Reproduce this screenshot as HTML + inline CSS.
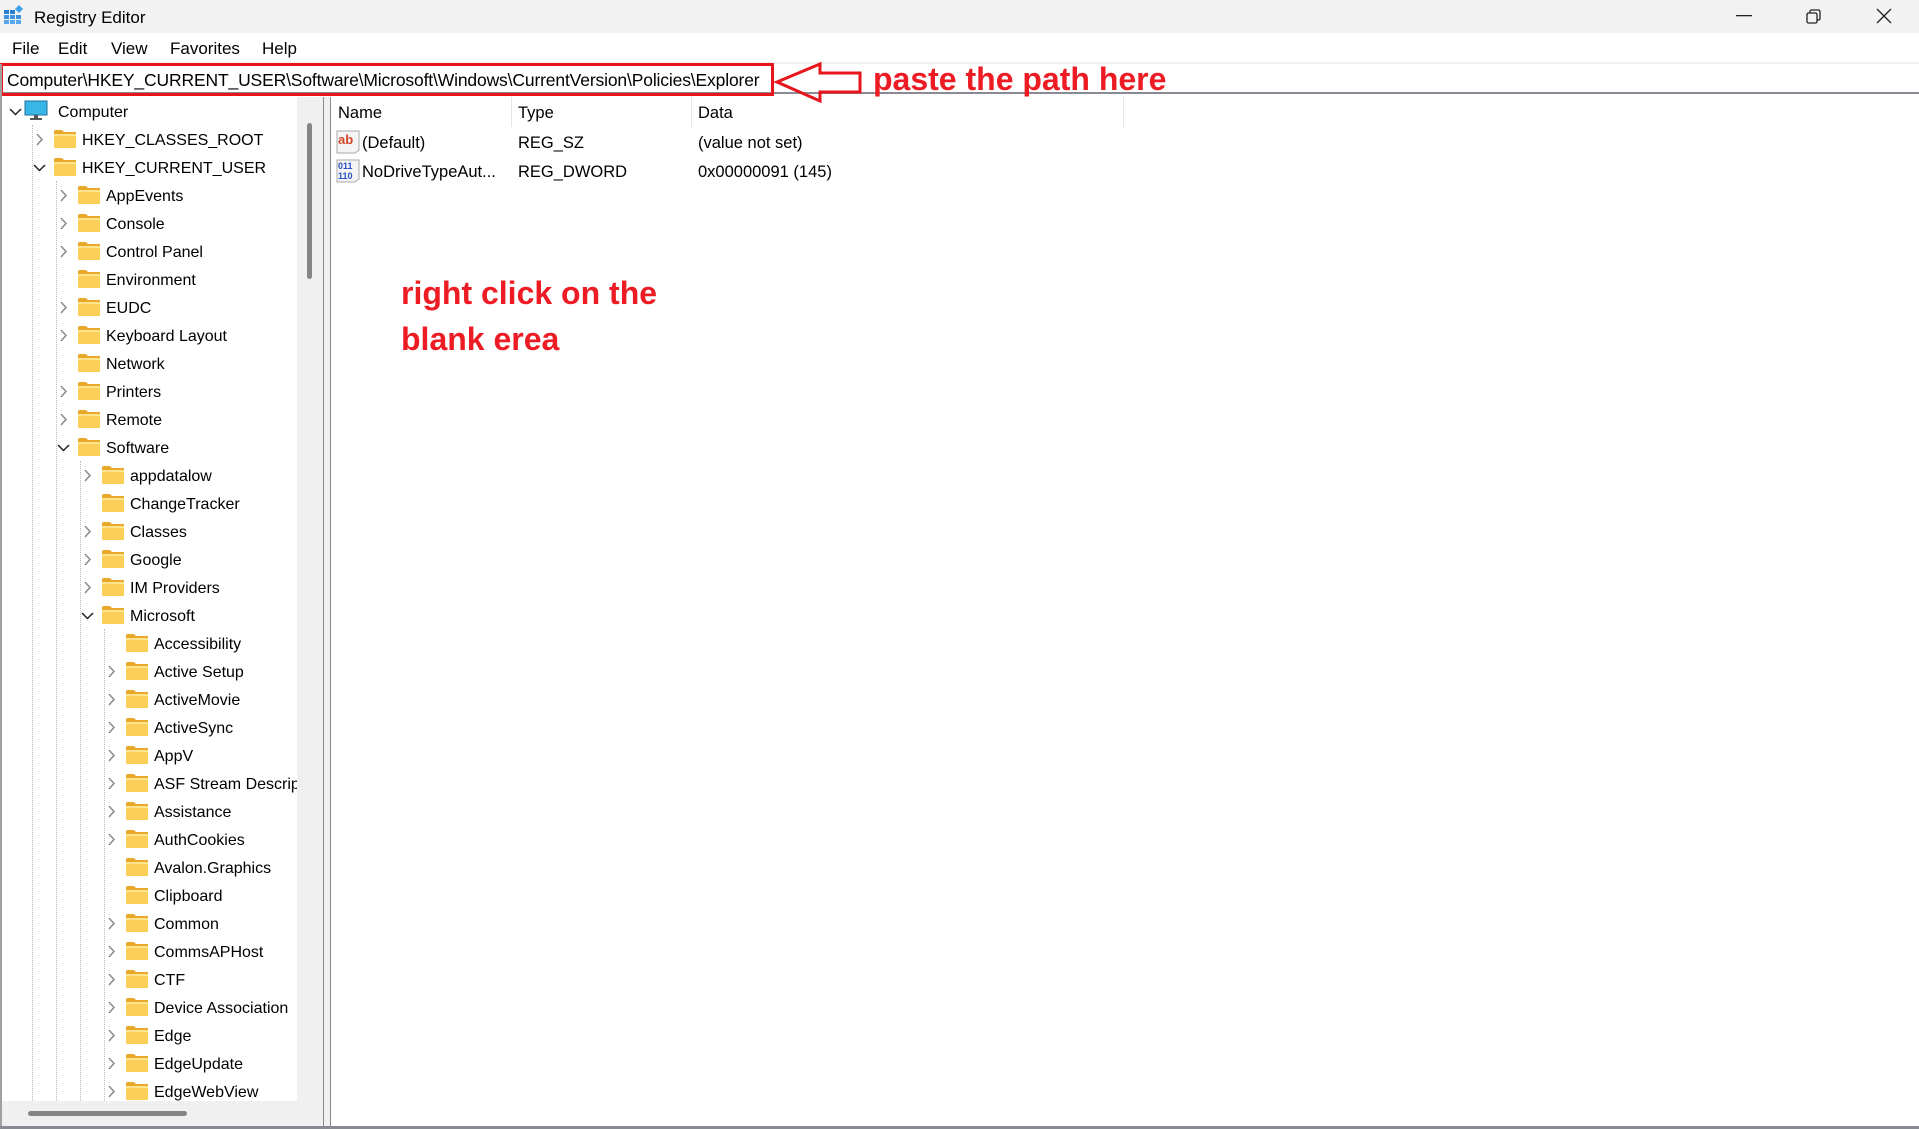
<!DOCTYPE html>
<html><head><meta charset="utf-8">
<style>
*{margin:0;padding:0;box-sizing:border-box}
body{width:1919px;height:1129px;overflow:hidden;background:#fff;font-family:"Liberation Sans",sans-serif;font-size:17px;color:#000;position:relative}
.abs{position:absolute}
#title{left:0;top:0;width:1919px;height:33px;background:#f2f2f2}
#menu{left:0;top:33px;width:1919px;height:29px;background:#fff}
#menu span{position:absolute;top:6px}
#gap{left:0;top:62px;width:1919px;height:2px;background:#f0f0f0}
#addr{left:0;top:64px;width:1919px;height:30px;background:#fff;border-bottom:2px solid #8a8a93}
#tree{left:2px;top:97px;width:295px;height:1004px;overflow:hidden;background:#fff;font-size:16px}
.r{position:absolute;height:28px;white-space:nowrap}
.r svg{position:absolute}
.r .t{position:absolute;left:56px;top:7px}
.f{left:28px;top:5px}
.c{left:9px;top:8px}
.r.l1{left:24px}.r.l2{left:48px}.r.l3{left:72px}.r.l4{left:96px}
.lst{font-size:16.5px}
</style></head><body>
<div id="title" class="abs">
<svg class="abs" style="left:3px;top:4px" width="20" height="22" viewBox="0 0 20 22"><rect x="1" y="6" width="5" height="4" fill="#2d7fd0"/><rect x="7" y="6" width="5" height="4" fill="#2d7fd0"/><rect x="1" y="11" width="5" height="4" fill="#3c92e0"/><rect x="7" y="11" width="5" height="4" fill="#3c92e0"/><rect x="13" y="11" width="5" height="4" fill="#3c92e0"/><rect x="1" y="16" width="5" height="4" fill="#56a8ee"/><rect x="7" y="16" width="5" height="4" fill="#56a8ee"/><rect x="13" y="16" width="5" height="4" fill="#56a8ee"/><path d="M16 1 L20 5 L16 9 L12 5Z" fill="#3aa0e8"/></svg>
<span class="abs" style="left:34px;top:8px;font-size:17px">Registry Editor</span>
<svg class="abs" style="left:1736px;top:15px" width="16" height="2"><rect width="16" height="1.3" fill="#222"/></svg>
<svg class="abs" style="left:1806px;top:9px" width="15" height="15" viewBox="0 0 15 15" fill="none" stroke="#222" stroke-width="1.3"><rect x="1" y="4" width="10" height="10" rx="1.5"/><path d="M4 4V2.5A1.5 1.5 0 0 1 5.5 1H12.5A1.5 1.5 0 0 1 14 2.5V9.5A1.5 1.5 0 0 1 12.5 11H11"/></svg>
<svg class="abs" style="left:1876px;top:8px" width="16" height="16" viewBox="0 0 16 16" stroke="#222" stroke-width="1.3"><path d="M1 1L15 15M15 1L1 15"/></svg>
</div>
<div id="menu" class="abs"><span style="left:12px">File</span><span style="left:58px">Edit</span><span style="left:111px">View</span><span style="left:170px">Favorites</span><span style="left:262px">Help</span></div>
<div id="gap" class="abs"></div>
<div id="addr" class="abs"><span class="abs" style="left:7px;top:6px;font-size:17.5px;letter-spacing:-0.15px">Computer\HKEY_CURRENT_USER\Software\Microsoft\Windows\CurrentVersion\Policies\Explorer</span></div>
<div class="abs" style="left:0;top:63px;width:774px;height:33px;border:3px solid #e8141c"></div>
<svg class="abs" style="left:772px;top:60px" width="92" height="46" viewBox="0 0 92 46"><path d="M5 22 L48 4 L48 13 L88 13 L88 32 L48 32 L48 41 Z" fill="none" stroke="#e8141c" stroke-width="3"/></svg>
<div class="abs" style="left:873px;top:61px;font-size:32px;font-weight:bold;color:#ed1c24">paste the path here</div>
<div class="abs" style="left:401px;top:270px;font-size:32px;font-weight:bold;color:#ed1c24;line-height:46px">right click on the<br>blank erea</div>

<div id="tree" class="abs">
<svg width="0" height="0" style="position:absolute"><defs>
<g id="fold"><path d="M0 2 Q0 0 2 0 H8 L10 2 H22 V18 H0Z" fill="#e8a92a"/><rect x="0" y="4" width="22" height="14" fill="#fcd058"/><rect x="0" y="4" width="22" height="2" fill="#ffe38c"/></g>
<polyline id="cr" points="2,1 7,6.5 2,12" fill="none" stroke="#8a8a8a" stroke-width="1.5"/>
<polyline id="cd" points="1,3 6.5,8.5 12,3" fill="none" stroke="#222" stroke-width="1.5"/>
</defs></svg>
<div class="abs" style="left:30px;top:28px;height:976px;border-left:1px dotted #bbb"></div>
<div class="abs" style="left:54px;top:84px;height:920px;border-left:1px dotted #bbb"></div>
<div class="abs" style="left:78px;top:364px;height:640px;border-left:1px dotted #bbb"></div>
<div class="abs" style="left:102px;top:532px;height:472px;border-left:1px dotted #bbb"></div>

<div class="r" style="top:0;left:0"><svg class="c" width="14" height="14" style="left:7px;top:9px"><use href="#cd"/></svg><svg width="24" height="22" style="left:22px;top:3px" viewBox="0 0 24 22"><rect x="1" y="1" width="22" height="14" fill="#39b6e6" stroke="#1f6f9a"/><rect x="10" y="15" width="4" height="3" fill="#555"/><rect x="6" y="18" width="12" height="2" fill="#555"/></svg><span class="t">Computer</span></div>
<div class="r l1" style="top:28px"><svg class="c" width="14" height="14"><use href="#cr"/></svg><svg class="f" width="22" height="18"><use href="#fold"/></svg><span class="t">HKEY_CLASSES_ROOT</span></div>
<div class="r l1" style="top:56px"><svg class="c" width="14" height="14" style="left:7px;top:9px"><use href="#cd"/></svg><svg class="f" width="22" height="18"><use href="#fold"/></svg><span class="t">HKEY_CURRENT_USER</span></div>
<div class="r l2" style="top:84px"><svg class="c" width="14" height="14"><use href="#cr"/></svg><svg class="f" width="22" height="18"><use href="#fold"/></svg><span class="t">AppEvents</span></div>
<div class="r l2" style="top:112px"><svg class="c" width="14" height="14"><use href="#cr"/></svg><svg class="f" width="22" height="18"><use href="#fold"/></svg><span class="t">Console</span></div>
<div class="r l2" style="top:140px"><svg class="c" width="14" height="14"><use href="#cr"/></svg><svg class="f" width="22" height="18"><use href="#fold"/></svg><span class="t">Control Panel</span></div>
<div class="r l2" style="top:168px"><svg class="f" width="22" height="18"><use href="#fold"/></svg><span class="t">Environment</span></div>
<div class="r l2" style="top:196px"><svg class="c" width="14" height="14"><use href="#cr"/></svg><svg class="f" width="22" height="18"><use href="#fold"/></svg><span class="t">EUDC</span></div>
<div class="r l2" style="top:224px"><svg class="c" width="14" height="14"><use href="#cr"/></svg><svg class="f" width="22" height="18"><use href="#fold"/></svg><span class="t">Keyboard Layout</span></div>
<div class="r l2" style="top:252px"><svg class="f" width="22" height="18"><use href="#fold"/></svg><span class="t">Network</span></div>
<div class="r l2" style="top:280px"><svg class="c" width="14" height="14"><use href="#cr"/></svg><svg class="f" width="22" height="18"><use href="#fold"/></svg><span class="t">Printers</span></div>
<div class="r l2" style="top:308px"><svg class="c" width="14" height="14"><use href="#cr"/></svg><svg class="f" width="22" height="18"><use href="#fold"/></svg><span class="t">Remote</span></div>
<div class="r l2" style="top:336px"><svg class="c" width="14" height="14" style="left:7px;top:9px"><use href="#cd"/></svg><svg class="f" width="22" height="18"><use href="#fold"/></svg><span class="t">Software</span></div>
<div class="r l3" style="top:364px"><svg class="c" width="14" height="14"><use href="#cr"/></svg><svg class="f" width="22" height="18"><use href="#fold"/></svg><span class="t">appdatalow</span></div>
<div class="r l3" style="top:392px"><svg class="f" width="22" height="18"><use href="#fold"/></svg><span class="t">ChangeTracker</span></div>
<div class="r l3" style="top:420px"><svg class="c" width="14" height="14"><use href="#cr"/></svg><svg class="f" width="22" height="18"><use href="#fold"/></svg><span class="t">Classes</span></div>
<div class="r l3" style="top:448px"><svg class="c" width="14" height="14"><use href="#cr"/></svg><svg class="f" width="22" height="18"><use href="#fold"/></svg><span class="t">Google</span></div>
<div class="r l3" style="top:476px"><svg class="c" width="14" height="14"><use href="#cr"/></svg><svg class="f" width="22" height="18"><use href="#fold"/></svg><span class="t">IM Providers</span></div>
<div class="r l3" style="top:504px"><svg class="c" width="14" height="14" style="left:7px;top:9px"><use href="#cd"/></svg><svg class="f" width="22" height="18"><use href="#fold"/></svg><span class="t">Microsoft</span></div>
<div class="r l4" style="top:532px"><svg class="f" width="22" height="18"><use href="#fold"/></svg><span class="t">Accessibility</span></div>
<div class="r l4" style="top:560px"><svg class="c" width="14" height="14"><use href="#cr"/></svg><svg class="f" width="22" height="18"><use href="#fold"/></svg><span class="t">Active Setup</span></div>
<div class="r l4" style="top:588px"><svg class="c" width="14" height="14"><use href="#cr"/></svg><svg class="f" width="22" height="18"><use href="#fold"/></svg><span class="t">ActiveMovie</span></div>
<div class="r l4" style="top:616px"><svg class="c" width="14" height="14"><use href="#cr"/></svg><svg class="f" width="22" height="18"><use href="#fold"/></svg><span class="t">ActiveSync</span></div>
<div class="r l4" style="top:644px"><svg class="c" width="14" height="14"><use href="#cr"/></svg><svg class="f" width="22" height="18"><use href="#fold"/></svg><span class="t">AppV</span></div>
<div class="r l4" style="top:672px"><svg class="c" width="14" height="14"><use href="#cr"/></svg><svg class="f" width="22" height="18"><use href="#fold"/></svg><span class="t">ASF Stream Descriptor</span></div>
<div class="r l4" style="top:700px"><svg class="c" width="14" height="14"><use href="#cr"/></svg><svg class="f" width="22" height="18"><use href="#fold"/></svg><span class="t">Assistance</span></div>
<div class="r l4" style="top:728px"><svg class="c" width="14" height="14"><use href="#cr"/></svg><svg class="f" width="22" height="18"><use href="#fold"/></svg><span class="t">AuthCookies</span></div>
<div class="r l4" style="top:756px"><svg class="f" width="22" height="18"><use href="#fold"/></svg><span class="t">Avalon.Graphics</span></div>
<div class="r l4" style="top:784px"><svg class="f" width="22" height="18"><use href="#fold"/></svg><span class="t">Clipboard</span></div>
<div class="r l4" style="top:812px"><svg class="c" width="14" height="14"><use href="#cr"/></svg><svg class="f" width="22" height="18"><use href="#fold"/></svg><span class="t">Common</span></div>
<div class="r l4" style="top:840px"><svg class="c" width="14" height="14"><use href="#cr"/></svg><svg class="f" width="22" height="18"><use href="#fold"/></svg><span class="t">CommsAPHost</span></div>
<div class="r l4" style="top:868px"><svg class="c" width="14" height="14"><use href="#cr"/></svg><svg class="f" width="22" height="18"><use href="#fold"/></svg><span class="t">CTF</span></div>
<div class="r l4" style="top:896px"><svg class="c" width="14" height="14"><use href="#cr"/></svg><svg class="f" width="22" height="18"><use href="#fold"/></svg><span class="t">Device Association</span></div>
<div class="r l4" style="top:924px"><svg class="c" width="14" height="14"><use href="#cr"/></svg><svg class="f" width="22" height="18"><use href="#fold"/></svg><span class="t">Edge</span></div>
<div class="r l4" style="top:952px"><svg class="c" width="14" height="14"><use href="#cr"/></svg><svg class="f" width="22" height="18"><use href="#fold"/></svg><span class="t">EdgeUpdate</span></div>
<div class="r l4" style="top:980px"><svg class="c" width="14" height="14"><use href="#cr"/></svg><svg class="f" width="22" height="18"><use href="#fold"/></svg><span class="t">EdgeWebView</span></div>
</div>
<div class="abs" style="left:297px;top:97px;width:26px;height:1004px;background:#f0f0f0"></div>
<div class="abs" style="left:307px;top:123px;width:5px;height:156px;background:#858585;border-radius:3px"></div>
<div class="abs" style="left:2px;top:1101px;width:321px;height:25px;background:#f0f0f0"></div>
<div class="abs" style="left:28px;top:1111px;width:159px;height:5px;background:#858585;border-radius:3px"></div>
<div class="abs" style="left:0;top:64px;width:2px;height:1065px;background:#a0a0a0"></div>
<div class="abs" style="left:323px;top:97px;width:1px;height:1032px;background:#8a8a93"></div>
<div class="abs" style="left:324px;top:97px;width:6px;height:1032px;background:#f0f0f0"></div>
<div class="abs" style="left:330px;top:97px;width:1px;height:1032px;background:#8a8a93"></div>
<div class="abs" style="left:0;top:1126px;width:1919px;height:3px;background:#8a8a93"></div>
<div class="lst">
<div class="abs" style="left:338px;top:104px">Name</div>
<div class="abs" style="left:518px;top:104px">Type</div>
<div class="abs" style="left:698px;top:104px">Data</div>
<div class="abs" style="left:511px;top:97px;width:1px;height:30px;background:#e5e5e5"></div>
<div class="abs" style="left:691px;top:97px;width:1px;height:30px;background:#e5e5e5"></div>
<div class="abs" style="left:1123px;top:97px;width:1px;height:30px;background:#e5e5e5"></div>
<svg class="abs" style="left:336px;top:130px" width="24" height="24" viewBox="0 0 24 24"><path d="M1 1H23V20L19 23H1Z" fill="#f4f4f4" stroke="#aaa"/><text x="2" y="14" font-family="Liberation Sans" font-weight="bold" font-size="13" fill="#d4472a">ab</text></svg>
<div class="abs" style="left:362px;top:134px">(Default)</div>
<div class="abs" style="left:518px;top:134px">REG_SZ</div>
<div class="abs" style="left:698px;top:134px">(value not set)</div>
<svg class="abs" style="left:336px;top:159px" width="24" height="24" viewBox="0 0 24 24"><path d="M1 1H23V20L19 23H1Z" fill="#f4f4f4" stroke="#aaa"/><text x="2" y="10" font-family="Liberation Sans" font-weight="bold" font-size="9" fill="#2b4fc4">011</text><text x="2" y="20" font-family="Liberation Sans" font-weight="bold" font-size="9" fill="#2b4fc4">110</text></svg>
<div class="abs" style="left:362px;top:163px">NoDriveTypeAut...</div>
<div class="abs" style="left:518px;top:163px">REG_DWORD</div>
<div class="abs" style="left:698px;top:163px">0x00000091 (145)</div>
</div>
</body></html>
